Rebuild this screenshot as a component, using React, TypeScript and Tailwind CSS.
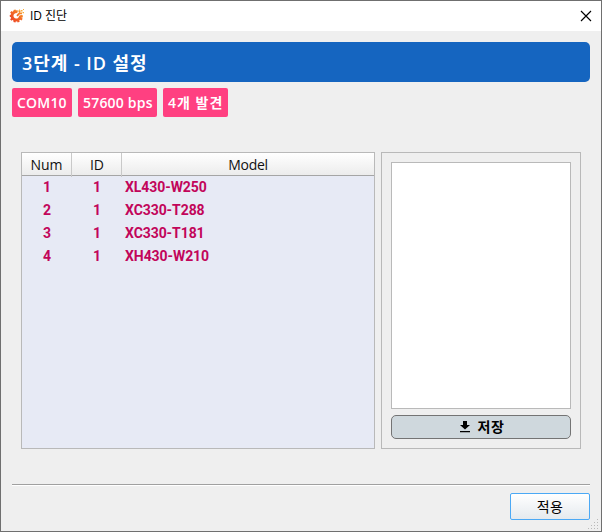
const latin = "font-['Open_Sans','Noto_Sans_CJK_KR',sans-serif]";

const rows = [
  { num: 1, id: 1, model: 'XL430-W250' },
  { num: 2, id: 1, model: 'XC330-T288' },
  { num: 3, id: 1, model: 'XC330-T181' },
  { num: 4, id: 1, model: 'XH430-W210' },
];

function AppIcon() {
  return (
    <svg width="16" height="16" viewBox="0 0 16 16" fill="none">
      <defs>
        <linearGradient id="flame" x1="2" y1="14" x2="15" y2="1" gradientUnits="userSpaceOnUse">
          <stop stopColor="#ec3f25" />
          <stop offset="0.5" stopColor="#f36b25" />
          <stop offset="1" stopColor="#fbb52b" />
        </linearGradient>
      </defs>
      <path d="M8.6 3.9A4.2 4.2 0 1 0 11.4 7.5" stroke="url(#flame)" strokeWidth="2.9" />
      <path
        d="M6.2 4.2 5.5 1.8M3.7 5.4 1.8 3.8M2.9 7.8.8 8M3.7 10.3 1.8 12M6 12l-.6 2.2M8.8 12l.9 2.2M11 10.2l2.1 1.5M11.4 8.2l2.4.1"
        stroke="url(#flame)"
        strokeWidth="2.2"
      />
      <path d="m8 7.8 3.2-3.3M9.5 3.2h2M11 5.3h2" stroke="url(#flame)" strokeWidth="1.8" />
      <path d="M12 2h1.5v1.5H12zM14 1h1v1h-1zM13.5 4h1.5v1.2h-1.5zM10 1.5h1v1h-1z" fill="#f9ac38" />
    </svg>
  );
}

function TitleBar() {
  return (
    <header className="flex h-[30px] shrink-0 items-center bg-white pl-2 pr-[9px] text-black">
      <AppIcon />
      <span className="ml-[5px] whitespace-nowrap text-[12px] leading-4 tracking-[-0.05px]">ID 진단</span>
      <svg className="ml-auto" width="12" height="12" viewBox="0 0 12 12" fill="none" stroke="#000" strokeWidth="1.15">
        <path d="m1 1 10 10M11 1 1 11" />
      </svg>
    </header>
  );
}

function ResultTable() {
  return (
    <section className="flex h-[297px] w-[354px] flex-col border border-[#b9b9b9] bg-[#e7eaf5]">
      <div className="grid h-[23px] grid-cols-[50px_50px_1fr] border-b border-[#a5a5a5] bg-linear-to-b from-white to-[#ececec] text-center text-[14px] leading-[24px] text-[#111]">
        <div className="border-r border-[#c9c9c9]">Num</div>
        <div className="border-r border-[#c9c9c9] pl-px">ID</div>
        <div className="tracking-[-0.3px]">Model</div>
      </div>
      {rows.map((row) => (
        <div
          key={row.num}
          className="grid h-[23px] grid-cols-[50px_50px_1fr] text-center font-[Roboto,sans-serif] text-[14px] font-bold leading-[23px] text-[#c2055a]"
        >
          <div>{row.num}</div>
          <div>{row.id}</div>
          <div className="pl-[3px] text-left tracking-[-0.07px]">{row.model}</div>
        </div>
      ))}
    </section>
  );
}

function SavePanel() {
  return (
    <section className="flex h-[297px] w-[200px] flex-col gap-1.5 border border-[#b9b9b9] p-[9px]">
      <div className="h-[247px] border border-[#b9b9b9] bg-white" />
      <button className="flex h-6 items-center justify-center rounded-[5px] border border-[#747474] bg-[#cfd8dd] pl-0.5 text-[14px] font-bold text-black">
        <svg width="10" height="12" viewBox="0 0 10 12">
          <path d="M3 0h4v4h3L5 8.5 0 4h3zM0 10h10v1.3H0z" />
        </svg>
        <span className="ml-2 leading-5 tracking-[0.5px]">저장</span>
      </button>
    </section>
  );
}

function Tag({ className, children }: { className: string; children: string }) {
  return (
    <span className={`flex h-[29px] items-center whitespace-nowrap rounded-[2px] bg-[#ff4081] pl-[5px] ${className}`}>
      {children}
    </span>
  );
}

export default function App() {
  return (
    <div className={`flex h-[532px] w-[602px] flex-col overflow-hidden border border-[#6f6f6f] bg-[#efefef] ${latin}`}>
      <TitleBar />
      <main className="flex flex-1 flex-col px-[11px] pt-[11px]">
        <h1 className="flex h-10 shrink-0 items-center rounded-[5px] bg-[#1565c0] pl-[10px] text-[18px] font-semibold text-white">
          <span className="whitespace-nowrap pt-px leading-6 tracking-[0.95px]">3단계 - ID 설정</span>
        </h1>
        <div className="mt-1.5 flex gap-1.5 text-[14px] font-semibold text-white">
          <Tag className="w-[60px] tracking-[0.2px]">COM10</Tag>
          <Tag className="w-[79px] tracking-[0.2px]">57600 bps</Tag>
          <Tag className="w-[65px] tracking-[1px]">4개 발견</Tag>
        </div>
        <div className="mt-[35px] flex gap-1.5 pl-[9px]">
          <ResultTable />
          <SavePanel />
        </div>
        <div className="mt-[35px] h-0.5 border-b border-t border-b-white border-t-[#a0a0a0]" />
        <button className="mt-[7px] flex h-[27px] w-20 items-center justify-center self-end rounded-[2px] border border-[#4ba9f5] bg-linear-to-b from-white to-[#e5eaee] text-[14px] tracking-[0.4px] text-black">
          적용
        </button>
      </main>
      <svg className="-mt-3 mr-0.5 shrink-0 self-end" width="12" height="12" fill="#b9b9b9">
        <path d="M10 0h1v1h-1zM10 3h1v1h-1zM10 6h1v1h-1zM10 9h1v1h-1zM7 3h1v1H7zM7 6h1v1H7zM7 9h1v1H7zM4 6h1v1H4zM4 9h1v1H4zM1 9h1v1H1z" />
      </svg>
    </div>
  );
}
